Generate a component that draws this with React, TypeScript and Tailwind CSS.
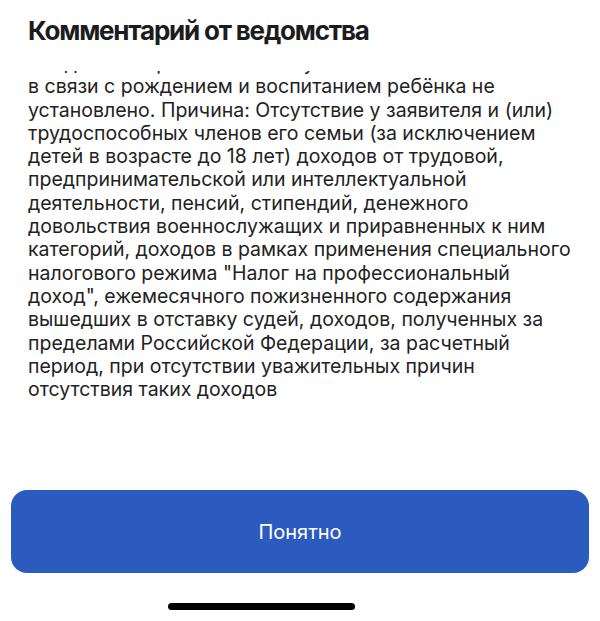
const lines = [
  "Сведения о праве на выплату пособия",
  "в связи с рождением и воспитанием ребёнка не",
  "установлено. Причина: Отсутствие у заявителя и (или)",
  "трудоспособных членов его семьи (за исключением",
  "детей в возрасте до 18 лет) доходов от трудовой,",
  "предпринимательской или интеллектуальной",
  "деятельности, пенсий, стипендий, денежного",
  "довольствия военнослужащих и приравненных к ним",
  "категорий, доходов в рамках применения специального",
  "налогового режима \"Налог на профессиональный",
  "доход\", ежемесячного пожизненного содержания",
  "вышедших в отставку судей, доходов, полученных за",
  "пределами Российской Федерации, за расчетный",
  "период, при отсутствии уважительных причин",
  "отсутствия таких доходов",
];

export default function App() {
  return (
    <div
      className="w-[600px] h-[621px] bg-white flex flex-col text-[#1c1c1e]"
      style={{ fontFamily: "Inter, 'Noto Sans', sans-serif" }}
    >
      <h1 className="px-[28px] pt-[14px] text-[26px] leading-[34px] font-bold tracking-[-1.2px]">
        Комментарий от ведомства
      </h1>

      {/* comment body, scrolled a little past its first line */}
      <div className="mt-[23px] h-[390px] overflow-hidden">
        <div className="-mt-[19px] px-[28px] text-[19.5px] leading-[23.3px] text-[#222]">
          {lines.map((l, i) => (
            <div key={i} className="whitespace-nowrap">
              {l}
            </div>
          ))}
        </div>
      </div>

      <div className="px-[11px] mt-auto">
        <button className="w-full h-[83px] rounded-[16px] bg-[#2c5bc0] text-white text-[20px]">
          Понятно
        </button>
      </div>

      <div className="h-[48px] pt-[30px]">
        <div className="ml-[168px] w-[187px] h-[7px] rounded-full bg-black" />
      </div>
    </div>
  );
}
